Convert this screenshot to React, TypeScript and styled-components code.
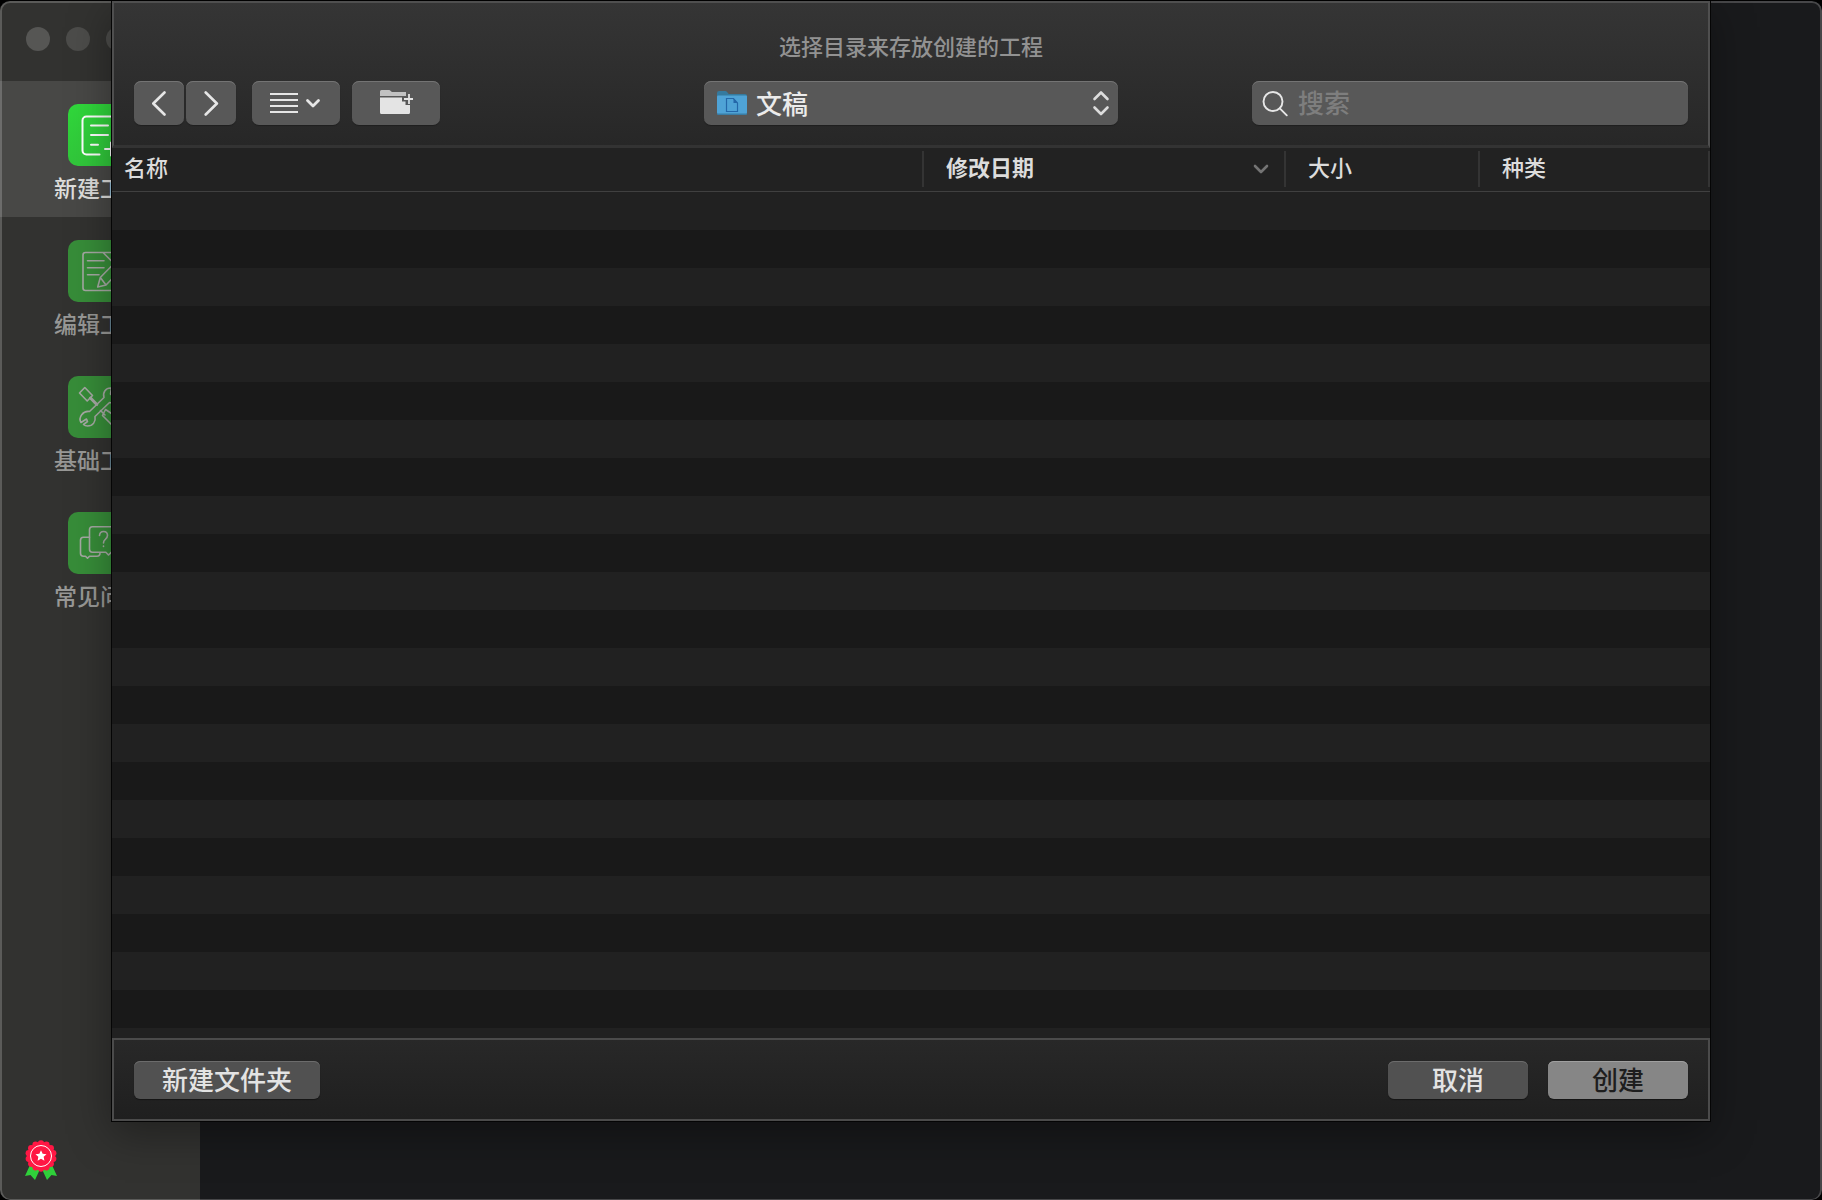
import React from "react";
import styled, { createGlobalStyle, css } from "styled-components";

const GlobalStyle = createGlobalStyle`
  * { box-sizing: border-box; }
  body {
    margin: 0;
    background: #000;
    color: #dcdcdc;
    font-family: "Noto Sans CJK SC", "Noto Sans", sans-serif;
    font-weight: 500;
  }
  button, input, select { font: inherit; color: inherit; margin: 0; }
`;

const Window = styled.div`
  position: relative;
  display: flex;
  height: 100vh;
  border-top: 1px solid #000;
  border-radius: 10px;
  overflow: hidden;
  background: #191a1c;

  &::after {
    content: "";
    position: absolute;
    inset: 0;
    border: 2px solid rgba(255, 255, 255, 0.2);
    border-bottom-width: 1px;
    border-radius: 10px;
    pointer-events: none;
  }
`;

const Sidebar = styled.aside`
  flex: 0 0 200px;
  display: flex;
  flex-direction: column;
  background: #323230;
`;

const TrafficLights = styled.div`
  display: flex;
  gap: 16px;
  height: 80px;
  padding: 26px;
`;

const Light = styled.span<{ $tone: string }>`
  width: 24px;
  height: 24px;
  border-radius: 50%;
  background: ${(p) => p.$tone};
`;

const Nav = styled.nav`
  display: flex;
  flex-direction: column;
  flex: 1;
`;

const NavItem = styled.button<{ $active?: boolean }>`
  display: flex;
  flex-direction: column;
  align-items: center;
  gap: 9px;
  height: 136px;
  padding: 23px 0 0;
  border: 0;
  background: ${(p) => (p.$active ? "#484846" : "transparent")};
  color: ${(p) => (p.$active ? "#dededc" : "#989896")};
  font-size: 23px;
  line-height: 24px;
`;

const Tile = styled.span<{ $active?: boolean }>`
  width: 64px;
  height: 62px;
  border-radius: 10px;
  background: ${(p) => (p.$active ? "linear-gradient(#30d83b, #31c63b)" : "#378d39")};
  color: ${(p) => (p.$active ? "#fff" : "#a6a9a4")};

  svg { display: block; }
`;

const SidebarFooter = styled.div`
  padding: 0 25px 20px;

  svg { display: block; }
`;

const SheetLayer = styled.div`
  position: absolute;
  inset: 0 0 78px;
  z-index: 1;
  display: flex;
  padding: 0 111px;
`;

const Sheet = styled.section`
  flex: 1;
  min-width: 0;
  display: flex;
  flex-direction: column;
  border: 1px solid #050505;
  border-top: 0;
  background: #212121;
  box-shadow: 0 12px 40px rgba(0, 0, 0, 0.35);
`;

const Header = styled.header`
  flex: none;
  height: 147px;
  padding: 26px 20px 0;
  border: 2px solid #4f4f4f;
  border-bottom: 3px solid #333;
  background: linear-gradient(#353535, #272727);
`;

const Title = styled.h1`
  margin: 0 0 20px;
  font-size: 22px;
  line-height: 32px;
  font-weight: 500;
  text-align: center;
  color: #929292;
`;

const Toolbar = styled.div`
  display: grid;
  grid-template-columns: 1fr minmax(200px, 414px) 1fr;
  align-items: center;
`;

const ToolGroup = styled.div`
  display: flex;
  gap: 12px;
`;

const Segmented = styled.div`
  display: flex;
  gap: 2px;
  margin-right: 4px;
`;

const raised = css`
  border: 0;
  border-radius: 7px;
  background: #585858;
  box-shadow: inset 0 1px #747474, 0 1px 1px rgba(0, 0, 0, 0.25);
`;

const ToolButton = styled.button<{ $wide?: boolean }>`
  ${raised}
  display: flex;
  align-items: center;
  justify-content: center;
  width: ${(p) => (p.$wide ? 88 : 50)}px;
  height: 44px;
  padding: 0;
  color: #e6e6e6;
`;

const Location = styled.label`
  position: relative;
  display: block;

  svg { position: absolute; pointer-events: none; }
  svg:first-child { left: 13px; top: 9px; }
  svg:last-child { right: 8px; top: 9px; }
`;

const LocationSelect = styled.select`
  ${raised}
  display: block;
  appearance: none;
  width: 100%;
  height: 44px;
  padding: 0 40px 2px 52px;
  font-size: 26px;
  color: #ebebeb;
`;

const Search = styled.label`
  ${raised}
  display: flex;
  align-items: center;
  justify-self: end;
  gap: 9px;
  width: min(436px, 90%);
  height: 44px;
  padding: 0 10px;
`;

const SearchInput = styled.input`
  flex: 1;
  min-width: 0;
  padding: 0 0 2px;
  border: 0;
  outline: 0;
  background: transparent;
  font-size: 26px;
  line-height: 38px;

  &::placeholder { color: #7e7e7e; opacity: 1; }
`;

const FileArea = styled.div`
  flex: 1;
  min-height: 0;
  overflow: hidden;
  background: repeating-linear-gradient(#212121 0 38px, #191919 38px 76px) 0 44px;
`;

const FileTable = styled.table`
  width: 100%;
  table-layout: fixed;
  border-spacing: 0;
  background: #222;
`;

const Column = styled.th<{ $width?: number; $sorted?: boolean }>`
  width: ${(p) => (p.$width ? `${p.$width}px` : "auto")};
  height: 44px;
  padding: 2px 0 4px;
  border-bottom: 1px solid #404040;
  font-size: 22px;
  line-height: 24px;
  font-weight: ${(p) => (p.$sorted ? 700 : 500)};
  text-align: left;
`;

const ColumnLabel = styled.div<{ $first?: boolean }>`
  display: flex;
  align-items: center;
  justify-content: space-between;
  height: 36px;
  padding: 0 15px 5px ${(p) => (p.$first ? 12 : 22)}px;
  border-right: 2px solid #343434;

  svg { margin-top: 6px; }
`;

const Footer = styled.footer`
  flex: none;
  display: flex;
  gap: 20px;
  height: 83px;
  padding: 21px 20px;
  border: 2px solid #4b4b4b;
  background: linear-gradient(#282828, #1f1f1f);
`;

const FooterButton = styled.button<{ $primary?: boolean; $start?: boolean }>`
  min-width: ${(p) => (p.$start ? 186 : 140)}px;
  height: 38px;
  margin-right: ${(p) => (p.$start ? "auto" : 0)};
  padding: 0 0 2px;
  border: 0;
  border-radius: 6px;
  background: ${(p) => (p.$primary ? "#868686" : "#515151")};
  box-shadow: inset 0 1px ${(p) => (p.$primary ? "#a0a0a0" : "#6c6c6c")}, 0 1px 1px rgba(0, 0, 0, 0.4);
  color: ${(p) => (p.$primary ? "#1e1e1e" : "#e3e3e3")};
  font-size: 26px;
  line-height: 36px;
`;

type DrawingProps = { w: number; h: number; stroke?: number; color?: string; children: React.ReactNode };

const Drawing = ({ w, h, stroke = 2, color = "currentColor", children }: DrawingProps) => (
  <svg
    width={w}
    height={h}
    viewBox={`0 0 ${w} ${h}`}
    fill="none"
    stroke={color}
    strokeWidth={stroke}
    strokeLinecap="round"
    strokeLinejoin="round"
    aria-hidden="true"
  >
    {children}
  </svg>
);

const NewProjectIcon = () => (
  <Drawing w={62} h={62}>
    <path d="M31.5 50.5H18.5a4 4 0 0 1-4-4v-30a4 4 0 0 1 4-4h25a4 4 0 0 1 4 4v18M23 21.500h17M23 31h17M23 40.700h7M37 45h12M43 38.500v13" />
  </Drawing>
);

const EditProjectIcon = () => (
  <Drawing w={62} h={62} stroke={1.6}>
    <path d="M35 12.500H17.500a2.500 2.500 0 0 0-2.500 2.500v33a2.500 2.500 0 0 0 2.500 2.500h28a2.500 2.500 0 0 0 2.500-2.500V40M35 12.500l13 13M35 12.500h11M19.500 20.700H36M19.500 27.700H36M19.500 34.700H31" />
    <path d="M32.300 37.500L47 22.500l6 7L38 45l-8.300 2zM32.300 37.500L38 45" />
  </Drawing>
);

const ToolsIcon = () => (
  <Drawing w={62} h={62} stroke={1.6}>
    <path d="M11.500 17l5.300-5.500 7.700 8-5.300 5.500z" />
    <path d="M22.500 22l6.300 6.500" strokeWidth="3" />
    <path d="M21.500 35.500L36 21.500c-1.500-5 1.500-10 7.500-9.500l-1 6 4 3 5-4c1 7-5 10.500-10 9.500L27 40.500c1 5-2 9.500-7.500 9.500q-2.500 0-4-1.500l4-3-1-2.500-5.500 3.500c-3-5 2-12 8.500-11z" />
    <path d="M32.500 34.500l4.500 4.500M37.500 33.500l-3 6 12 12 5-5-8-9z" />
  </Drawing>
);

const HelpIcon = () => (
  <Drawing w={62} h={62} stroke={1.6}>
    <path d="M24.500 14.700h22a3 3 0 0 1 3 3v19.500a3 3 0 0 1-3 3h-3l-3 2.800-2.700-2.800H24.500a3 3 0 0 1-3-3V17.700a3 3 0 0 1 3-3z" />
    <path d="M21.500 25.200h-6a3 3 0 0 0-3 3v13a3 3 0 0 0 3 3h2l2 2 2-2H29q3 0 3-3.500" />
    <path d="M31.500 23.500q.3-4 4-4 4 0 4 4 0 2-2.200 3.800-1.800 1.400-1.800 3.700M35.500 34v.5" />
  </Drawing>
);

const scallops = Array.from({ length: 14 }, (_, i) => {
  const angle = (i * Math.PI) / 7;
  return { x: 16 + Math.sin(angle) * 12.6, y: 16 - Math.cos(angle) * 12.6 };
});

const starPoints = Array.from({ length: 10 }, (_, i) => {
  const angle = (i * Math.PI) / 5;
  const radius = i % 2 ? 2.800 : 5.800;
  return `${16 + Math.sin(angle) * radius},${16 - Math.cos(angle) * radius}`;
}).join(" ");

const MedalIcon = () => (
  <svg width="32" height="40" viewBox="0 0 32 40" role="img" aria-label="会员">
    <path d="M5 25L0 36l5.500-1 4.500 5 6-13 6 13 4.500-5 5.500 1-5-11z" fill="#2fd03a" />
    <g fill="#ff1744">
      <circle cx="16" cy="16" r="13.800" />
      {scallops.map((s, i) => (
        <circle key={i} cx={s.x} cy={s.y} r="3.100" />
      ))}
    </g>
    <circle cx="16" cy="16" r="10.500" fill="none" stroke="#fff" strokeWidth="1" />
    <polygon points={starPoints} fill="#fff" />
  </svg>
);

const navItems = [
  { label: "新建工程", icon: <NewProjectIcon />, active: true },
  { label: "编辑工程", icon: <EditProjectIcon /> },
  { label: "基础工具", icon: <ToolsIcon /> },
  { label: "常见问题", icon: <HelpIcon /> },
];

const BackIcon = () => (
  <Drawing w={16} h={26} stroke={2.600}>
    <path d="M13.500 2.500L2.300 13.500l11.200 11" />
  </Drawing>
);

const ForwardIcon = () => (
  <Drawing w={16} h={26} stroke={2.600}>
    <path d="M2.700 2.500l11.200 11-11.200 11" />
  </Drawing>
);

const ListViewIcon = () => (
  <Drawing w={54} h={22}>
    <path d="M1 2h28M1 8h28M1 14h28M1 20h28" strokeLinecap="butt" />
    <path d="M38.500 8.500L44 14l5.500-5.500" strokeWidth="2.800" />
  </Drawing>
);

const NewFolderIcon = () => (
  <svg width="34" height="30" viewBox="0 0 34 30" aria-hidden="true">
    <path d="M1 8V3.500Q1 2 2.500 2H10q1 0 1.700 1t1.800 1H27v4z" fill="#c2c2c2" />
    <path d="M1 9.500h22v4h3.500V17H31v7.500q0 1.500-1.500 1.500h-27Q1 26 1 24.500z" fill="#e4e4e4" />
    <path d="M30 6v10M25 11h10" stroke="#e4e4e4" strokeWidth="1.800" />
  </svg>
);

const DocumentsFolderIcon = () => (
  <svg width="32" height="26" viewBox="0 0 32 26" aria-hidden="true">
    <path d="M0 6V3q0-2 2-2h6.500q1.200 0 2 1.500T12.500 4H28q2 0 2 2z" fill="#357a9f" />
    <rect y="6" width="30" height="19" rx="1" fill="#3a7ca4" />
    <rect y="5.500" width="30" height="18" rx="1" fill="#4fa3d6" />
    <path d="M9.500 8.500h7l4 4.500v8.500h-11z" fill="none" stroke="#2467a8" strokeWidth="1.200" />
    <path d="M16.500 8.500V13h4z" fill="#2467a8" />
  </svg>
);

const UpDownIcon = () => (
  <Drawing w={18} h={26} stroke={2.600}>
    <path d="M2.500 9L9 2.500 15.500 9M2.500 17.500L9 24l6.500-6.500" />
  </Drawing>
);

const SearchIcon = () => (
  <Drawing w={27} h={27} stroke={1.900} color="#e6e6e6">
    <circle cx="11" cy="11.500" r="9.500" />
    <path d="M17.800 18.300l7 7" />
  </Drawing>
);

const SortIcon = () => (
  <Drawing w={16} h={12} stroke={2.600} color="#747474">
    <path d="M2 3l6 6 6-6" />
  </Drawing>
);

export default function App() {
  return (
    <>
      <GlobalStyle />
      <Window>
        <Sidebar>
          <TrafficLights>
            <Light $tone="#565654" />
            <Light $tone="#4c4c4a" />
            <Light $tone="#4c4c4a" />
          </TrafficLights>
          <Nav>
            {navItems.map((item) => (
              <NavItem key={item.label} type="button" $active={item.active}>
                <Tile $active={item.active}>{item.icon}</Tile>
                {item.label}
              </NavItem>
            ))}
          </Nav>
          <SidebarFooter>
            <MedalIcon />
          </SidebarFooter>
        </Sidebar>

        <SheetLayer>
          <Sheet role="dialog" aria-labelledby="sheet-title">
            <Header>
              <Title id="sheet-title">选择目录来存放创建的工程</Title>
              <Toolbar>
                <ToolGroup>
                  <Segmented>
                    <ToolButton type="button" aria-label="后退"><BackIcon /></ToolButton>
                    <ToolButton type="button" aria-label="前进"><ForwardIcon /></ToolButton>
                  </Segmented>
                  <ToolButton type="button" $wide aria-label="显示方式"><ListViewIcon /></ToolButton>
                  <ToolButton type="button" $wide aria-label="新建文件夹"><NewFolderIcon /></ToolButton>
                </ToolGroup>
                <Location>
                  <DocumentsFolderIcon />
                  <LocationSelect aria-label="位置" defaultValue="documents">
                    <option value="documents">文稿</option>
                  </LocationSelect>
                  <UpDownIcon />
                </Location>
                <Search>
                  <SearchIcon />
                  <SearchInput type="text" placeholder="搜索" aria-label="搜索" />
                </Search>
              </Toolbar>
            </Header>

            <FileArea>
              <FileTable>
                <thead>
                  <tr>
                    <Column scope="col"><ColumnLabel $first>名称</ColumnLabel></Column>
                    <Column scope="col" $width={362} $sorted aria-sort="descending">
                      <ColumnLabel>修改日期<SortIcon /></ColumnLabel>
                    </Column>
                    <Column scope="col" $width={194}><ColumnLabel>大小</ColumnLabel></Column>
                    <Column scope="col" $width={230}><ColumnLabel>种类</ColumnLabel></Column>
                  </tr>
                </thead>
                <tbody />
              </FileTable>
            </FileArea>

            <Footer>
              <FooterButton type="button" $start>新建文件夹</FooterButton>
              <FooterButton type="button">取消</FooterButton>
              <FooterButton type="button" $primary>创建</FooterButton>
            </Footer>
          </Sheet>
        </SheetLayer>
      </Window>
    </>
  );
}
